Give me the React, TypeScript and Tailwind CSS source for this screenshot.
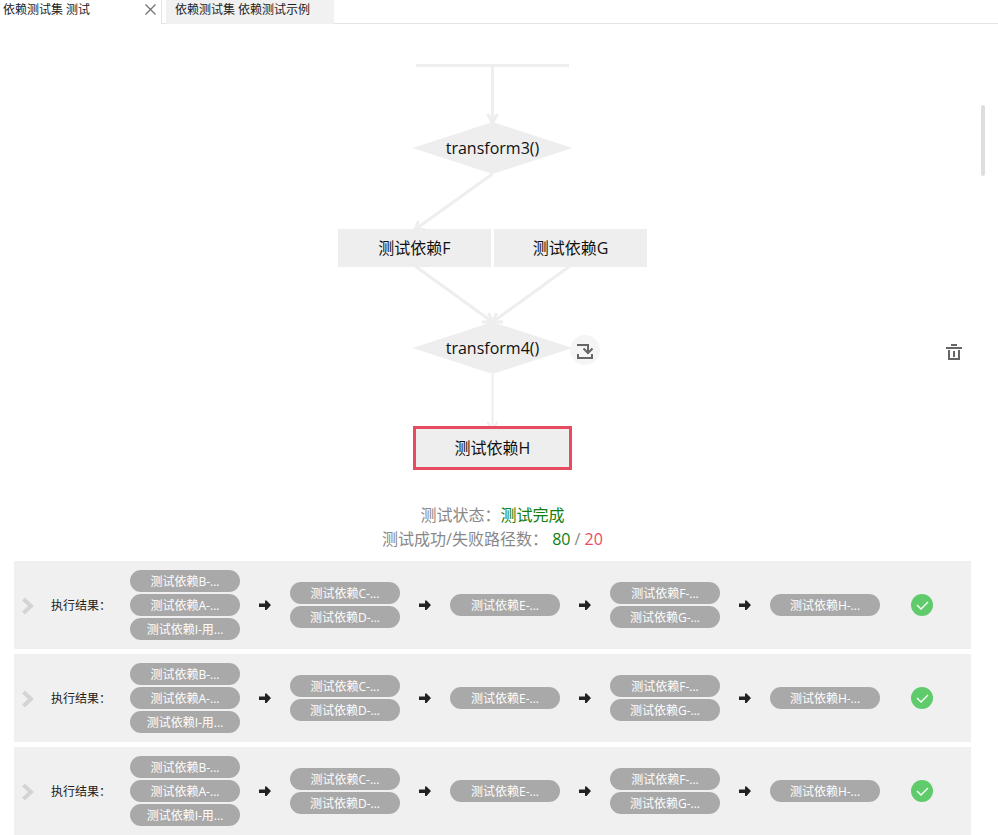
import React from "react";

const FONT = "font-['Open_Sans','Noto_Sans_CJK_SC',sans-serif]";

const STEPS: string[][] = [
  ["测试依赖B-...", "测试依赖A-...", "测试依赖I-用..."],
  ["测试依赖C-...", "测试依赖D-..."],
  ["测试依赖E-..."],
  ["测试依赖F-...", "测试依赖G-..."],
  ["测试依赖H-..."],
];

function TabBar() {
  return (
    <nav className="flex h-6 text-xs leading-5 text-[#222]">
      <div className="flex w-[162px] items-start justify-between border-r border-[#e4e4e4] pl-[3px] pr-[5px]">
        <button type="button">依赖测试集 测试</button>
        <button type="button" aria-label="关闭" className="pt-1">
          <svg width="11" height="11" viewBox="0 0 11 11" stroke="#777" strokeWidth="1.4" fill="none">
            <path d="M0.5 0.5 L10.5 10.5 M10.5 0.5 L0.5 10.5" />
          </svg>
        </button>
      </div>
      <div className="w-1 border-b border-[#e4e4e4]" />
      <button type="button" className="flex w-[168px] items-start bg-[#f1f1f1] pl-[9px]">
        依赖测试集 依赖测试示例
      </button>
      <div className="grow border-b border-[#e4e4e4]" />
    </nav>
  );
}

function FlowChart() {
  return (
    <section className="relative h-[479px]">
      <div className="relative mx-auto h-full w-[309px] text-base text-[#111]">
        <svg className="absolute inset-0" width="309" height="479" viewBox="0 0 309 479" fill="none" stroke="#eee" strokeWidth="3">
          <path d="M78 41.5 H231" />
          <path d="M154.5 42 V98 M149.5 90 L154.5 99 L159.5 90" />
          <path d="M154.5 150 L77 205.5 M80.5 197 L77 205.5 L87 205.5" strokeWidth="3" />
          <path d="M77 242 L154.5 298 M144 298 L154.5 298 L150.5 289" strokeWidth="3" />
          <path d="M232 242 L154.5 298 M165 298 L154.5 298 L158.5 289" strokeWidth="3" />
          <path d="M154.5 350 V403 M149.5 398 L154.5 406 L159.5 398" strokeWidth="2" />
          <path d="M74.5 124 L154.5 98 L234.5 124 L154.5 150 Z" fill="#eee" stroke="none" />
          <path d="M74.5 324 L154.5 298 L234.5 324 L154.5 350 Z" fill="#eee" stroke="none" />
        </svg>
        <div className="absolute left-[75px] top-[98px] flex h-[52px] w-[159px] items-center justify-center">transform3()</div>
        <div className="absolute left-0 top-[205px] flex h-[38px] w-[153px] items-center justify-center bg-[#eee]">测试依赖F</div>
        <div className="absolute right-0 top-[205px] flex h-[38px] w-[153px] items-center justify-center bg-[#eee]">测试依赖G</div>
        <div className="absolute left-[75px] top-[298px] flex h-[52px] w-[159px] items-center justify-center">transform4()</div>
        <button
          type="button"
          aria-label="插入"
          className="absolute left-[232px] top-[311px] flex size-[30px] items-center justify-center rounded-full bg-[#f5f5f5] pt-0.5"
        >
          <svg width="16" height="16" viewBox="0 0 16 16" fill="none" stroke="#666" strokeWidth="2">
            <path d="M0 2 H11 V9 M6.5 5.5 L11 10 L15.5 5.5" />
            <path d="M1 11 V15 H15 V11" />
          </svg>
        </button>
        <div className="absolute left-[75px] top-[402px] flex h-[44px] w-[159px] items-center justify-center border-3 border-[#e84a5f] bg-[#eee]">
          测试依赖H
        </div>
      </div>
      <button type="button" aria-label="删除" className="absolute right-[9px] top-[320px]">
        <svg width="16" height="16" viewBox="0 0 16 16" fill="none" stroke="#666" strokeWidth="2">
          <path d="M5 1 H11 M0 4 H16" />
          <path d="M3 6 V15 H13 V6 M8 7 V13" />
        </svg>
      </button>
    </section>
  );
}

function Arrow() {
  return (
    <svg width="12" height="10" viewBox="0 0 12 10" fill="#222" aria-hidden="true">
      <path d="M0 3.5 H6 V0.5 H7.5 L12 5 L7.5 10 H6 V7 H0 Z" />
    </svg>
  );
}

function ResultRow() {
  return (
    <li className="flex items-center bg-[#f0f0f0] py-[9px] pl-2 text-xs">
      <button type="button" aria-label="展开" className="flex w-[29px] items-center pt-0.5">
        <svg width="12" height="18" viewBox="0 0 12 18" fill="none" stroke="#d4d4d4" strokeWidth="4">
          <path d="M1.5 2 L9 9 L1.5 16" />
        </svg>
      </button>
      <span className="w-[79px] pt-0.5 text-[#222]">执行结果：</span>
      {STEPS.map((step, i) => (
        <React.Fragment key={i}>
          {i > 0 && (
            <span className="flex w-[50px] justify-center">
              <Arrow />
            </span>
          )}
          <div className="flex w-[110px] flex-col gap-0.5">
            {step.map((name) => (
              <span key={name} className="h-[22px] rounded-full bg-[#a9a9a9] text-center leading-6 text-white">
                {name}
              </span>
            ))}
          </div>
        </React.Fragment>
      ))}
      <svg className="ml-[31px]" width="22" height="22" viewBox="0 0 22 22" fill="none" role="img" aria-label="成功">
        <circle cx="11" cy="11" r="11" fill="#5fcb6b" />
        <path d="M6 11 L10 15 L17 8" stroke="#fff" strokeWidth="1.3" />
      </svg>
    </li>
  );
}

export default function App() {
  return (
    <div className={`relative bg-white ${FONT}`}>
      <TabBar />
      <main className="pl-[14px] pr-[27px]">
        <FlowChart />
        <div className="text-center text-base leading-6 text-[#888]">
          <p>
            测试状态：<span className="text-[#108010]">测试完成</span>
          </p>
          <p>
            测试成功/失败路径数： <span className="text-[#108010]">80</span> / <span className="text-[#e84a5f]">20</span>
          </p>
        </div>
        <ul className="mt-[10px] flex flex-col gap-[5px]">
          <ResultRow />
          <ResultRow />
          <ResultRow />
        </ul>
      </main>
      <div className="absolute right-[13px] top-[105px] h-[71px] w-1 rounded-full bg-[#dedede]" />
    </div>
  );
}
